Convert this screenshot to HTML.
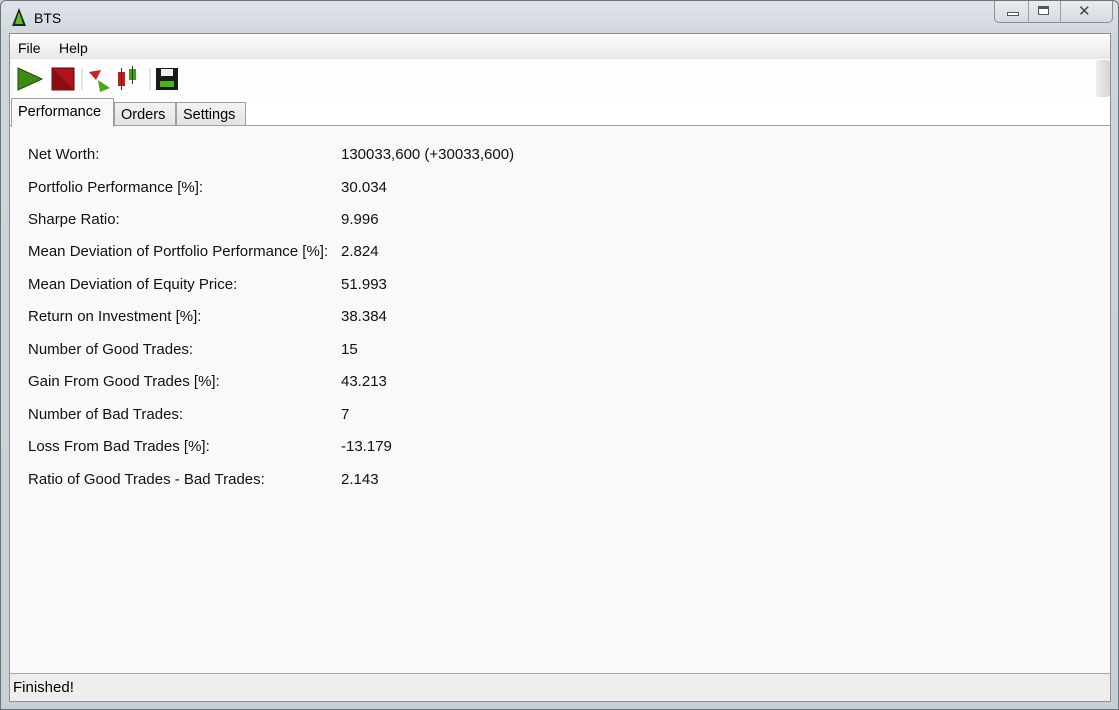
<!DOCTYPE html>
<html><head><style>
*{margin:0;padding:0;box-sizing:border-box}
body{width:1119px;height:710px;overflow:hidden;background:#cdd3da;font-family:"Liberation Sans",sans-serif;position:relative}
.frame{position:absolute;left:0;top:0;width:1119px;height:710px;border:1px solid #6e7378;border-radius:6px 6px 0 0;background:linear-gradient(180deg,#dfe4ea 0,#cfd5dc 40px,#c9cfd6 100%)}
.title{position:absolute;left:33px;top:9px;font-size:14px;color:#000}
.caps{position:absolute;left:993px;top:0;width:119px;height:22px;border:1px solid #8a8f95;border-top:none;border-radius:0 0 5px 5px;background:linear-gradient(#e9ecef,#d6dadf)}
.caps div{position:absolute;top:0;height:21px;border-left:1px solid #9aa0a6}
.client{position:absolute;left:9px;top:33px;width:1102px;height:669px;border:1px solid #8c9096;background:#f9f9f9}
.menu{position:absolute;left:0;top:0;width:100%;height:25px;background:linear-gradient(#fcfcfc,#e8e8e8);font-size:14px}
.menu span{position:absolute;top:6px}
.tb{position:absolute;left:3px;top:26px;width:1097px;height:37px;background:#fdfdfe;border-radius:3px}
.tabs{position:absolute;left:0;top:63px;width:100%;height:29px;background:#fff;border-bottom:1px solid #a0a0a0}
.tab{position:absolute;top:5px;height:24px;border:1px solid #a0a0a0;background:linear-gradient(#f2f2f2,#e3e3e3);font-size:14.5px;padding:4px 6px 0}
.tab.a{top:1px;height:29px;background:#f9f9f9;border-bottom:none;padding-top:5px}
.row{position:absolute;left:18px;font-size:15px;color:#111}
.row b{font-weight:normal;position:absolute;left:313px;white-space:nowrap}
.row span{white-space:nowrap}
.status{position:absolute;left:0;bottom:0;width:100%;height:28px;background:#f0eded;border-top:1px solid #a9a9a9;font-size:15px;padding:5px 3px}
</style></head><body>
<div class="frame">
<svg style="position:absolute;left:11px;top:7px" width="14" height="19"><polygon points="7,0 14,18 0,18" fill="#1d2a14"/><polygon points="7,4 11,16 3,16" fill="#5fbf2a"/></svg>
<div class="title">BTS</div>
<div class="caps"><div style="left:33px"></div><div style="left:65px"></div>
<div style="position:absolute;left:12px;top:11px;width:12px;height:4px;border:1px solid #555;background:#fff"></div>
<div style="position:absolute;left:43px;top:5px;width:11px;height:9px;border:1px solid #555;background:#fff;border-top-width:3px"></div>
<div style="position:absolute;left:83px;top:1px;font-size:15px;color:#444;border:none">✕</div></div>
</div>
<div class="client">
<div class="menu"><span style="left:8px">File</span><span style="left:49px">Help</span></div>
<div class="tb">
<svg style="position:absolute;left:3px;top:6px" width="180" height="26">
<polygon points="2,2 26,13 2,24" fill="#3c8c12" stroke="#1f4a08"/>
<rect x="36" y="2" width="22" height="22" fill="#b0141a" stroke="#4a0a0a"/>
<polygon points="36,2 58,24 36,24" fill="#8a0d12"/>
<line x1="66" y1="2" x2="66" y2="24" stroke="#ccc"/>
<polygon points="73,6 85,4 80,14" fill="#d21e1e"/><polygon points="82,14 94,22 84,26" fill="#4aa81c"/>
<rect x="102" y="6" width="7" height="14" fill="#cc1818"/><line x1="105.5" y1="2" x2="105.5" y2="24" stroke="#333"/>
<rect x="113" y="3" width="7" height="11" fill="#3fa11a"/><line x1="116.5" y1="0" x2="116.5" y2="18" stroke="#333"/>
<line x1="134" y1="2" x2="134" y2="24" stroke="#ccc"/>
<rect x="140" y="2" width="22" height="22" fill="#1a1a1a"/><rect x="145" y="3" width="12" height="7" fill="#eee"/><rect x="144" y="15" width="14" height="6" fill="#4ab31c"/>
</svg>
<div style="position:absolute;right:0;top:0;width:14px;height:37px;background:linear-gradient(90deg,#eee,#d5d5d5);border-radius:3px"></div>
</div>
<div class="tabs">
<div class="tab a" style="left:1px;width:103px">Performance</div>
<div class="tab" style="left:104px;width:62px">Orders</div>
<div class="tab" style="left:166px;width:70px">Settings</div>
</div>
<div class="row" style="top:112px"><span>Net Worth:</span><b>130033,600 (+30033,600)</b></div>
<div class="row" style="top:145px"><span>Portfolio Performance [%]:</span><b>30.034</b></div>
<div class="row" style="top:177px"><span>Sharpe Ratio:</span><b>9.996</b></div>
<div class="row" style="top:209px"><span>Mean Deviation of Portfolio Performance [%]:</span><b>2.824</b></div>
<div class="row" style="top:242px"><span>Mean Deviation of Equity Price:</span><b>51.993</b></div>
<div class="row" style="top:274px"><span>Return on Investment [%]:</span><b>38.384</b></div>
<div class="row" style="top:307px"><span>Number of Good Trades:</span><b>15</b></div>
<div class="row" style="top:339px"><span>Gain From Good Trades [%]:</span><b>43.213</b></div>
<div class="row" style="top:372px"><span>Number of Bad Trades:</span><b>7</b></div>
<div class="row" style="top:404px"><span>Loss From Bad Trades [%]:</span><b>-13.179</b></div>
<div class="row" style="top:437px"><span>Ratio of Good Trades - Bad Trades:</span><b>2.143</b></div>
<div class="status">Finished!</div>
</div>
</body></html>
